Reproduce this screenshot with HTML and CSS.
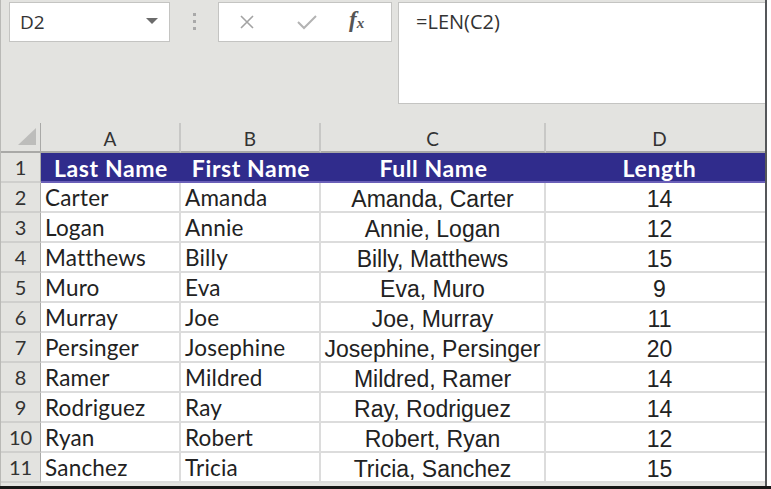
FILE: index.html
```html
<!DOCTYPE html>
<html lang="en">

<head>
  <meta charset="UTF-8">
  <meta name="viewport" content="width=device-width, initial-scale=1.0">
  <title>LEN formula</title>

  <link rel="stylesheet" href="styles.css">
</head>

<body>
  <div class="window">
    <div class="formula-bar">
      <div class="name-box">
        <span>D2</span>
        <span class="caret"></span>
      </div>
      <div class="grip"><i></i><i></i><i></i></div>
      <div class="fx-buttons">
        <svg class="btn-icon" width="18" height="18" viewBox="0 0 18 18">
          <path d="M3 3 L15 15 M15 3 L3 15" stroke="#a3a3a3" stroke-width="1.6" fill="none" />
        </svg>
        <svg class="btn-icon" width="22" height="18" viewBox="0 0 22 18">
          <path d="M2 9 L8 15 L20 3" stroke="#b3b3b3" stroke-width="2" fill="none" />
        </svg>
        <span class="fx">f<sub>x</sub></span>
      </div>
      <div class="formula-input">=LEN(C2)</div>
    </div>

    <div class="sheet">
      <div class="hd corner"><span class="tri"></span></div>
      <div class="hd col">A</div>
      <div class="hd col">B</div>
      <div class="hd col">C</div>
      <div class="hd col last">D</div>

      <div class="hd row">1</div>
      <div class="title">Last Name</div>
      <div class="title">First Name</div>
      <div class="title">Full Name</div>
      <div class="title last">Length</div>

      <div class="hd row">2</div>
      <div class="cell txt">Carter</div>
      <div class="cell txt">Amanda</div>
      <div class="cell mid">Amanda, Carter</div>
      <div class="cell mid last">14</div>

      <div class="hd row">3</div>
      <div class="cell txt">Logan</div>
      <div class="cell txt">Annie</div>
      <div class="cell mid">Annie, Logan</div>
      <div class="cell mid last">12</div>

      <div class="hd row">4</div>
      <div class="cell txt">Matthews</div>
      <div class="cell txt">Billy</div>
      <div class="cell mid">Billy, Matthews</div>
      <div class="cell mid last">15</div>

      <div class="hd row">5</div>
      <div class="cell txt">Muro</div>
      <div class="cell txt">Eva</div>
      <div class="cell mid">Eva, Muro</div>
      <div class="cell mid last">9</div>

      <div class="hd row">6</div>
      <div class="cell txt">Murray</div>
      <div class="cell txt">Joe</div>
      <div class="cell mid">Joe, Murray</div>
      <div class="cell mid last">11</div>

      <div class="hd row">7</div>
      <div class="cell txt">Persinger</div>
      <div class="cell txt">Josephine</div>
      <div class="cell mid">Josephine, Persinger</div>
      <div class="cell mid last">20</div>

      <div class="hd row">8</div>
      <div class="cell txt">Ramer</div>
      <div class="cell txt">Mildred</div>
      <div class="cell mid">Mildred, Ramer</div>
      <div class="cell mid last">14</div>

      <div class="hd row">9</div>
      <div class="cell txt">Rodriguez</div>
      <div class="cell txt">Ray</div>
      <div class="cell mid">Ray, Rodriguez</div>
      <div class="cell mid last">14</div>

      <div class="hd row">10</div>
      <div class="cell txt">Ryan</div>
      <div class="cell txt">Robert</div>
      <div class="cell mid">Robert, Ryan</div>
      <div class="cell mid last">12</div>

      <div class="hd row">11</div>
      <div class="cell txt">Sanchez</div>
      <div class="cell txt">Tricia</div>
      <div class="cell mid">Tricia, Sanchez</div>
      <div class="cell mid last">15</div>
    </div>
  </div>
  <div class="bottom-edge"></div>
</body>

</html>
```

FILE: styles.css
```css
* {
  margin: 0;
  padding: 0;
  box-sizing: border-box;
}

body {
  width: 771px;
  height: 489px;
  overflow: hidden;
  background: #fff;
  font-family: Lato, "Open Sans", sans-serif;
  color: #222;
}

.window {
  width: 767px;
  height: 486px;
  background: #e3e3e0;
  border-left: 1px solid #b9b9b6;
  border-right: 2px solid #55575a;
  overflow: hidden;
}

.bottom-edge {
  height: 3px;
  background: #161616;
}

/* formula bar */
.formula-bar {
  display: flex;
  align-items: flex-start;
  height: 123px;
  padding-top: 2px;
}

.name-box {
  margin-left: 8px;
  width: 161px;
  height: 40px;
  background: #fff;
  border: 1px solid #c4c4c2;
  display: flex;
  align-items: center;
  justify-content: space-between;
  padding: 0 11px 0 10px;
  font-family: "Open Sans", sans-serif;
  font-size: 19px;
  color: #333;
}

.caret {
  width: 0;
  height: 0;
  border-left: 6px solid transparent;
  border-right: 6px solid transparent;
  border-top: 6px solid #6b6b6b;
  margin-bottom: 3px;
}

.grip {
  width: 48px;
  height: 40px;
  display: flex;
  flex-direction: column;
  align-items: center;
  justify-content: center;
  gap: 4px;
  padding-bottom: 2px;
}

.grip i {
  width: 3px;
  height: 3px;
  background: #a9a9a9;
}

.fx-buttons {
  width: 174px;
  height: 40px;
  background: #fff;
  border: 1px solid #c4c4c2;
  display: flex;
  align-items: center;
  padding-left: 19px;
}

.btn-icon:first-child {
  margin-right: 40px;
}

.btn-icon {
  margin-right: 31px;
}

.fx {
  font-family: "Liberation Serif", serif;
  font-style: italic;
  font-weight: bold;
  font-size: 23px;
  color: #555;
  margin-top: -5px;
}

.fx sub {
  font-size: 15px;
  vertical-align: -1px;
}

.formula-input {
  flex: 1;
  margin-left: 6px;
  height: 102px;
  background: #fff;
  border: 1px solid #c4c4c2;
  border-right: none;
  padding: 5px 0 0 17px;
  font-family: "Open Sans", sans-serif;
  font-size: 20px;
  color: #333;
}

/* sheet grid */
.sheet {
  display: grid;
  grid-template-columns: 40px 140px 140px 225px 219px;
  grid-template-rows: 30px repeat(11, 30px);
}

.hd {
  background: #e3e3e0;
  color: #333;
  font-family: Lato, sans-serif;
  display: flex;
  align-items: center;
  justify-content: center;
}

.corner {
  border-right: 1px solid #a9a9a7;
  border-bottom: 2px solid #a9a9a7;
  justify-content: flex-end;
  align-items: flex-end;
  padding: 0 4px 6px 0;
}

.tri {
  width: 0;
  height: 0;
  border-left: 18px solid transparent;
  border-bottom: 17px solid #bdbdbb;
}

.col {
  font-size: 19px;
  border-right: 2px solid #c8c8c6;
  border-bottom: 2px solid #a9a9a7;
  padding-top: 2px;
}

.col.last {
  border-right: none;
  padding-left: 8px;
}

.row {
  font-size: 20px;
  border-right: 1px solid #a9a9a7;
  border-bottom: 2px solid #cfcfcd;
}

.title {
  background: #302c8c;
  border-bottom: 2px solid #6a5fb8;
  color: #fff;
  font-weight: bold;
  font-size: 23px;
  letter-spacing: 0.6px;
  display: flex;
  align-items: center;
  justify-content: center;
  padding-top: 1px;
}

.title.last {
  padding-left: 8px;
}

.cell {
  background: #fff;
  border-right: 2px solid #dcdcdc;
  border-bottom: 2px solid #dcdcdc;
  display: flex;
  align-items: center;
  padding-top: 1px;
}

.cell.last {
  border-right: none;
  padding-left: 8px;
}

.txt {
  padding-left: 4px;
  font-family: Lato, sans-serif;
  font-size: 22.5px;
  letter-spacing: 0.2px;
}

.mid {
  justify-content: center;
  font-family: "Liberation Sans", Arial, sans-serif;
  font-size: 23px;
  padding-top: 4px;
}
```
